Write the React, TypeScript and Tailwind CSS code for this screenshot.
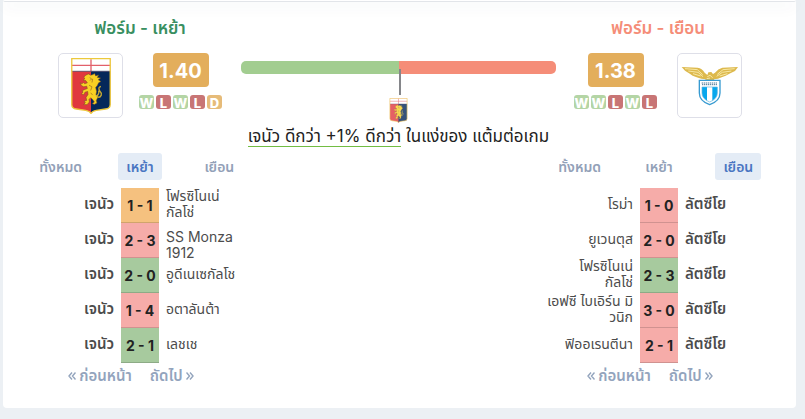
import { ReactNode } from "react";

type Result = "W" | "L" | "D";
type Match = { home: string[]; score: string; away: string[]; result: Result };

const homeMatches: Match[] = [
  { home: ["เจนัว"], score: "1 - 1", away: ["โฟรซิโนเน่", "กัลโช่"], result: "D" },
  { home: ["เจนัว"], score: "2 - 3", away: ["SS Monza", "1912"], result: "L" },
  { home: ["เจนัว"], score: "2 - 0", away: ["อูดีเนเซกัลโช"], result: "W" },
  { home: ["เจนัว"], score: "1 - 4", away: ["อตาลันต้า"], result: "L" },
  { home: ["เจนัว"], score: "2 - 1", away: ["เลชเช"], result: "W" },
];

const awayMatches: Match[] = [
  { home: ["โรม่า"], score: "1 - 0", away: ["ลัตซีโย"], result: "L" },
  { home: ["ยูเวนตุส"], score: "2 - 0", away: ["ลัตซีโย"], result: "L" },
  { home: ["โฟรซิโนเน่", "กัลโช่"], score: "2 - 3", away: ["ลัตซีโย"], result: "W" },
  { home: ["เอฟซี ไบเอิร์น มิ", "วนิก"], score: "3 - 0", away: ["ลัตซีโย"], result: "L" },
  { home: ["ฟิออเรนตีนา"], score: "2 - 1", away: ["ลัตซีโย"], result: "L" },
];

const badgeColor: Record<Result, string> = {
  W: "bg-[#b4d5a5]",
  L: "bg-[#c87575]",
  D: "bg-[#e6bb79]",
};

const scoreColor: Record<Result, string> = {
  W: "bg-[#a7ca9e] border-[#8dab86]",
  L: "bg-[#f6aca9] border-[#d09290]",
  D: "bg-[#f5c17f] border-[#d0a46c]",
};

function GenoaCrest({ className }: { className: string }) {
  return (
    <svg viewBox="42 20 120 169" className={className} aria-hidden="true">
      <path d="M44 22H160V160Q160 172 146 174L118 178Q106 180 102 187Q98 180 86 178L58 174Q44 172 44 160Z" fill="#e0383e" />
      <path d="M102 60H160V160Q160 172 146 174L118 178Q106 180 102 187Z" fill="#05285a" />
      <path d="M44 22H160V60H44Z" fill="#fff" />
      <path d="M102 24V60M44 42H160" stroke="#e2606a" strokeWidth="4" />
      <path d="M44 60H160" stroke="#26365f" strokeWidth="2" />
      <path
        d="M86 72L94 68L101 72L108 70L113 67L116 74L125 71L121 79L131 80L124 86L132 91L125 95L121 103L116 109L119 121L117 130L123 138L118 148L120 156L112 160L106 157L112 153L107 145L101 140L96 145L97 153L90 161L80 160L85 155L81 150L89 148L87 139L93 130L92 121L84 123L80 131L73 128L78 123L75 119L83 115L91 112L89 105L80 107L73 103L69 95L75 98L79 94L83 98L91 95L86 88L78 87L84 82L80 78Z"
        fill="#f8d023"
        stroke="#704a22"
        strokeWidth="1.5"
      />
      <path d="M117 132Q127 145 133 132Q135 126 128 119Q122 108 132 106M121 134Q128 125 125 118" fill="none" stroke="#c9aa32" strokeWidth="4" />
      <path d="M98 79L104 83L99 88M107 83L105 94M96 102L105 107L101 118M101 125L107 132" fill="none" stroke="#976621" strokeWidth="2" />
      <path d="M44 22H160V160Q160 172 146 174L118 178Q106 180 102 187Q98 180 86 178L58 174Q44 172 44 160Z" fill="none" stroke="#ecc93c" strokeWidth="4" />
    </svg>
  );
}

function LazioCrest({ className }: { className: string }) {
  return (
    <svg viewBox="18 46 172 120" className={className} aria-hidden="true">
      <path
        d="M19 49L67 51Q80 53 88 66L96 73L99 65L108 64L113 70L119 66Q128 54 141 51L188 49L179 61L165 68L151 75L139 80L128 84L116 86L118 91H88L91 86L78 84L64 80L52 75L41 68L29 60Z"
        fill="#ddb94d"
      />
      <path
        d="M29 54L66 57L82 72M39 61L68 65L83 78M53 69L76 76M178 54L143 57L126 71M168 61L141 65L124 77M156 69L133 76M96 78L104 74L112 81M94 84L104 82"
        fill="none"
        stroke="#f8e8a4"
        strokeWidth="3"
      />
      <path d="M72 89H134V127Q134 151 103 162Q72 151 72 127Z" fill="#fff" stroke="#389bd1" strokeWidth="4" />
      <path d="M80 109H95V150Q80 141 80 127Z" fill="#06a7ed" />
      <path d="M111 109H126V127Q126 141 111 150Z" fill="#06a7ed" />
      <path d="M80 109H126V127Q126 145 103 154Q80 145 80 127Z" fill="none" stroke="#62b6df" strokeWidth="2" />
      <path d="M79 97H127M80 102H125" stroke="#4c7795" strokeWidth="3" strokeDasharray="4 2" />
    </svg>
  );
}

function LogoBox({ children }: { children: ReactNode }) {
  return (
    <div className="flex size-[65px] items-center justify-center rounded-[5px] border border-[#dedfe8] bg-white">
      {children}
    </div>
  );
}

function Rating({ value, form }: { value: string; form: Result[] }) {
  return (
    <div className="flex flex-col items-center gap-2">
      <div className="flex h-[34px] w-14 items-center justify-center rounded-[4px] bg-[#e3ae5c] pt-0.5 text-xl font-bold text-white">
        {value}
      </div>
      <div className="flex gap-0.5">
        {form.map((r, i) => (
          <span
            key={i}
            className={`flex h-[14px] w-[15px] items-center justify-center rounded-[3px] pt-0.5 text-[13px] leading-[14px] font-extrabold text-white ${badgeColor[r]}`}
          >
            {r}
          </span>
        ))}
      </div>
    </div>
  );
}

function Chevrons({ flip = false }: { flip?: boolean }) {
  return (
    <svg viewBox="0 0 8 10" className={flip ? "h-[10px] w-2 rotate-180" : "h-[10px] w-2"} aria-hidden="true">
      <path d="M4 1.500L1 5L4 8.500M7.500 1.500L4.500 5L7.500 8.500" fill="none" stroke="currentColor" strokeWidth="1.400" />
    </svg>
  );
}

function Lines({ lines, strong }: { lines: string[]; strong: boolean }) {
  const latin = /^[A-Z]/.test(lines[0]);
  return (
    <div
      className={`flex h-[35px] flex-col justify-center ${latin ? "pt-2" : "pb-1"} ${
        strong ? "text-[15px] font-semibold" : "text-sm"
      }`}
    >
      {lines.map((line) => (
        <span key={line} className="block leading-4 whitespace-nowrap">
          {line}
        </span>
      ))}
    </div>
  );
}

function FormTable({ active, matches, bold }: { active: number; matches: Match[]; bold: "home" | "away" }) {
  const tabs = ["ทั้งหมด", "เหย้า", "เยือน"];
  return (
    <section className="w-[238px]">
      <div className="grid grid-cols-3 justify-items-center">
        {tabs.map((tab, i) => (
          <button
            key={tab}
            type="button"
            className={`h-[27px] rounded-[3px] px-2 text-sm font-semibold ${
              i === active ? "bg-[#e4ecf6] text-[#4a76c2]" : "text-[#93a1b8]"
            }`}
          >
            {tab}
          </button>
        ))}
      </div>
      <table className="mt-2 w-full table-fixed border-collapse text-sm leading-4 text-[#4c4c4c]">
        <tbody>
          {matches.map((m, i) => (
            <tr key={i} className="h-[35px]">
              <td className="p-0 pr-[7px] text-right">
                <Lines lines={m.home} strong={bold === "home"} />
              </td>
              <td className="w-[38px] p-0">
                <div
                  className={`flex h-[35px] items-center justify-center border-b pt-0.5 font-bold whitespace-nowrap text-[#222] ${scoreColor[m.result]}`}
                >
                  {m.score}
                </div>
              </td>
              <td className="p-0 pl-[7px]">
                <Lines lines={m.away} strong={bold === "away"} />
              </td>
            </tr>
          ))}
        </tbody>
      </table>
      <div className="flex h-[26px] items-center justify-center gap-[18px] pr-[18px] text-[15px] font-semibold text-[#93a4bd]">
        <button type="button" className="flex items-center gap-[3px]">
          <Chevrons />
          ก่อนหน้า
        </button>
        <button type="button" className="flex items-center gap-[3px]">
          ถัดไป
          <Chevrons flip />
        </button>
      </div>
    </section>
  );
}

export default function App() {
  return (
    <div className="min-h-screen bg-[#ecf0f4] pr-[9px] pl-[3px] font-['Inter','Noto_Sans_Thai','Noto_Sans',sans-serif] text-[#222]">
      <main className="rounded-b-[4px] bg-white pb-[19px]">
        <div className="h-0.5 rounded-b-[4px] border-b border-[#e2e5e9] bg-white shadow-[0_4px_14px_rgba(60,70,90,0.14)]" />
        <div className="flex h-[146px] pt-3 pr-9 pl-9">
          <section className="flex w-[202px] flex-col items-center">
            <h2 className="mb-[11px] text-[17px] leading-7 font-semibold text-[#398f61]">ฟอร์ม - เหย้า</h2>
            <div className="flex gap-4">
              <LogoBox>
                <GenoaCrest className="h-14 w-10" />
              </LogoBox>
              <Rating value="1.40" form={["W", "L", "W", "L", "D"]} />
            </div>
          </section>
          <div className="flex flex-1 flex-col items-center pt-[47px]">
            <div className="relative flex h-[13px] w-full">
              <div className="w-1/2 rounded-l-[5px] bg-[#a2cd90]" />
              <div className="w-1/2 rounded-r-[5px] bg-[#f58d78]" />
              <span className="absolute top-2 left-1/2 h-[26px] w-0.5 bg-[#85868a]" />
            </div>
            <GenoaCrest className="mt-6 h-[25px] w-[19px] opacity-80" />
            <p className="mt-[3px] text-[17px] leading-5 whitespace-nowrap">
              <span className="inline-block border-b border-[#72bd43]">เจนัว ดีกว่า +1% ดีกว่า</span> ในแง่ของ แต้มต่อเกม
            </p>
          </div>
          <section className="flex w-[204px] flex-col items-center">
            <h2 className="mb-[11px] text-[17px] leading-7 font-semibold text-[#f58d78]">ฟอร์ม - เยือน</h2>
            <div className="flex gap-5">
              <Rating value="1.38" form={["W", "W", "L", "W", "L"]} />
              <LogoBox>
                <LazioCrest className="h-10 w-[58px]" />
              </LogoBox>
            </div>
          </section>
        </div>
        <div className="mt-[5px] flex justify-between px-[18px]">
          <FormTable active={1} matches={homeMatches} bold="home" />
          <FormTable active={2} matches={awayMatches} bold="away" />
        </div>
      </main>
    </div>
  );
}
